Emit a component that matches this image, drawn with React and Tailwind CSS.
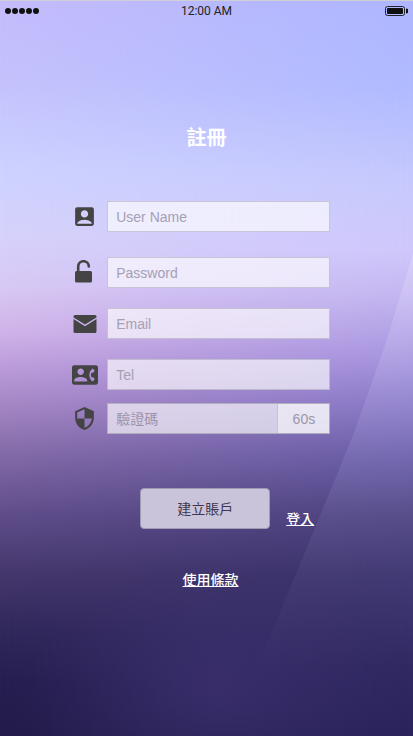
import { MdAccountBox, MdSecurity } from "react-icons/md";

function Backdrop() {
  return (
    <svg
      className="absolute inset-0 -z-10 h-full w-full"
      viewBox="0 0 413 736"
      preserveAspectRatio="none"
      aria-hidden="true"
    >
      <defs>
        <linearGradient id="left" x1="0" y1="0" x2="0" y2="1">
          <stop offset="0" stopColor="#c4bcfc" />
          <stop offset="0.1" stopColor="#c4c1fd" />
          <stop offset="0.23" stopColor="#cdd2ff" />
          <stop offset="0.32" stopColor="#d6d2fb" />
          <stop offset="0.39" stopColor="#d8c8f4" />
          <stop offset="0.45" stopColor="#d0b3e8" />
          <stop offset="0.5" stopColor="#bb9bd9" />
          <stop offset="0.56" stopColor="#a082c0" />
          <stop offset="0.62" stopColor="#8169a6" />
          <stop offset="0.7" stopColor="#5f4d8a" />
          <stop offset="0.78" stopColor="#45376c" />
          <stop offset="0.86" stopColor="#30275a" />
          <stop offset="0.93" stopColor="#251e4f" />
          <stop offset="1" stopColor="#231c4a" />
        </linearGradient>
        <linearGradient id="right" x1="0" y1="0" x2="0" y2="1">
          <stop offset="0" stopColor="#adb6ff" />
          <stop offset="0.12" stopColor="#b0baff" />
          <stop offset="0.25" stopColor="#c7c9fd" />
          <stop offset="0.34" stopColor="#cfc7fb" />
          <stop offset="0.4" stopColor="#c3b5f0" />
          <stop offset="0.48" stopColor="#a896e0" />
          <stop offset="0.55" stopColor="#8878c6" />
          <stop offset="0.62" stopColor="#685ca6" />
          <stop offset="0.7" stopColor="#4c427f" />
          <stop offset="0.78" stopColor="#3a326c" />
          <stop offset="0.86" stopColor="#342c66" />
          <stop offset="1" stopColor="#2a245c" />
        </linearGradient>
        <linearGradient id="fade" x1="0" y1="0" x2="1" y2="0">
          <stop offset="0" stopColor="#000" />
          <stop offset="1" stopColor="#fff" />
        </linearGradient>
        <mask id="across">
          <rect width="413" height="736" fill="url(#fade)" />
        </mask>
        <linearGradient id="beam" x1="0" y1="0" x2="0" y2="1">
          <stop offset="0" stopColor="#fff" stopOpacity="0.2" />
          <stop offset="0.5" stopColor="#c8c8ff" stopOpacity="0.12" />
          <stop offset="1" stopColor="#c8c8ff" stopOpacity="0" />
        </linearGradient>
        <radialGradient id="glow" cx="0.5" cy="0.5" r="0.5">
          <stop offset="0" stopColor="#4a3a80" stopOpacity="0.45" />
          <stop offset="1" stopColor="#4a3a80" stopOpacity="0" />
        </radialGradient>
      </defs>
      <rect width="413" height="736" fill="url(#left)" />
      <rect width="413" height="736" fill="url(#right)" mask="url(#across)" />
      <ellipse cx="215" cy="690" rx="190" ry="120" fill="url(#glow)" />
      <path d="M413 253L385 345L353 435L312 535L256 670H413Z" fill="url(#beam)" />
    </svg>
  );
}

function UnlockIcon() {
  return (
    <svg width="26" height="26" viewBox="0 0 26 26" fill="currentColor" aria-hidden="true">
      <rect x="3" y="11" width="17" height="11.500" rx="1.500" />
      <path d="M6.200 12V6.500a5.300 5.300 0 0 1 10.600 0" fill="none" stroke="currentColor" strokeWidth="2.600" strokeLinecap="round" />
    </svg>
  );
}

function EnvelopeIcon() {
  return (
    <svg width="24" height="24" viewBox="0 0 24 24" fill="currentColor" aria-hidden="true">
      <path d="M.5 5.400V4.500A1.500 1.500 0 0 1 2 3H22a1.500 1.500 0 0 1 1.500 1.500v.9L12 12.500Z" />
      <path d="M.5 7 12 14.200 23.500 7V19.500A1.500 1.500 0 0 1 22 21H2A1.500 1.500 0 0 1 .5 19.500Z" />
    </svg>
  );
}

function ContactIcon() {
  return (
    <svg width="26" height="26" viewBox="0 0 24 24" fill="currentColor" aria-hidden="true">
      <path d="M22 3H2C.9 3 0 3.900 0 5v14c0 1.100.9 2 2 2h20c1.100 0 1.990-.9 1.990-2L24 5c0-1.100-.9-2-2-2zM8 6c1.660 0 3 1.340 3 3s-1.340 3-3 3-3-1.340-3-3 1.340-3 3-3zm6 12H2v-1c0-2 4-3.100 6-3.100s6 1.100 6 3.100v1zm3.850-4h1.640L21 16l-1.990 1.990c-1.310-.98-2.280-2.380-2.730-3.990-.18-.64-.28-1.310-.28-2s.1-1.360.28-2c.45-1.620 1.420-3.010 2.730-3.990L21 8l-1.510 2h-1.640c-.22.63-.35 1.300-.35 2s.13 1.370.35 2z" />
    </svg>
  );
}

const fieldBox =
  "h-[31px] w-full min-w-0 border border-[#8c8c96]/40 bg-white/65 px-2 text-sm text-gray-700 outline-none placeholder:text-[#a5a0b4]";

function Field({ id, label, type, icon, className }) {
  return (
    <div className={"flex h-[31px] items-center " + className}>
      <label htmlFor={id} aria-label={label} className="flex w-[37px] shrink-0 justify-center pr-2 text-[#444444]">
        {icon}
      </label>
      <input id={id} type={type} placeholder={label} className={fieldBox} />
    </div>
  );
}

export default function App() {
  return (
    <div className="relative isolate flex min-h-screen flex-col overflow-hidden border-t border-[#d0cfd8] font-['Liberation_Sans','Noto_Sans_CJK_TC',sans-serif]">
      <Backdrop />
      <header className="grid h-5 grid-cols-3 items-center px-[5px] text-xs text-[#222222]">
        <div className="flex gap-px" aria-label="Signal">
          {[0, 1, 2, 3, 4].map((n) => (
            <span key={n} className="size-[6px] rounded-full bg-[#101010]" />
          ))}
        </div>
        <time className="text-center font-[Roboto,sans-serif]">12:00 AM</time>
        <svg className="justify-self-end" width="23" height="10" viewBox="0 0 23 10" aria-label="Battery">
          <rect x="0.5" y="0.5" width="19" height="9" rx="2" fill="none" stroke="#222" />
          <rect x="2" y="2" width="16" height="6" rx="1" fill="#101010" />
          <path d="M21 2.500a2.500 2.500 0 0 1 0 5Z" fill="#101010" />
        </svg>
      </header>

      <main className="flex flex-col">
        <h1 className="mt-[103px] text-center text-xl font-bold text-white">註冊</h1>

        <form className="ml-[17%] mr-[20%] mt-[49px] flex flex-col">
          <Field id="user" label="User Name" type="text" icon={<MdAccountBox size={25} />} className="" />
          <Field id="password" label="Password" type="password" icon={<UnlockIcon />} className="mt-[25px]" />
          <Field id="email" label="Email" type="email" icon={<EnvelopeIcon />} className="mt-5" />
          <Field id="tel" label="Tel" type="tel" icon={<ContactIcon />} className="mt-5" />
          <div className="mt-[13px] flex h-[31px] items-center">
            <label htmlFor="code" aria-label="驗證碼" className="flex w-[37px] shrink-0 justify-center pr-2 text-[#444444]">
              <MdSecurity size={25} />
            </label>
            <div className="flex h-[31px] min-w-0 flex-1 border border-[#8c8c96]/50 bg-white/65">
              <input
                id="code"
                placeholder="驗證碼"
                className="min-w-0 flex-1 px-2 text-sm text-gray-700 outline-none placeholder:text-[#9c94ac]"
              />
              <button type="button" className="w-[52px] border-l border-[#c8c0dc] bg-white/45 text-sm text-[#9a96a6]">
                60s
              </button>
            </div>
          </div>

          <div className="mt-[54px] flex items-end pl-[70px]">
            <button
              type="submit"
              className="h-[41px] w-[130px] shrink-0 rounded border border-[#a09ab4] bg-[#c9c4d9] text-sm text-[#3d3650]"
            >
              建立賬戶
            </button>
            <a href="#login" className="ml-4 shrink-0 text-sm font-medium text-white underline">
              登入
            </a>
          </div>
        </form>

        <p className="mt-[41px] pl-2 text-center text-sm font-medium text-white">
          <a href="#terms" className="underline">
            使用條款
          </a>
        </p>
      </main>
    </div>
  );
}
